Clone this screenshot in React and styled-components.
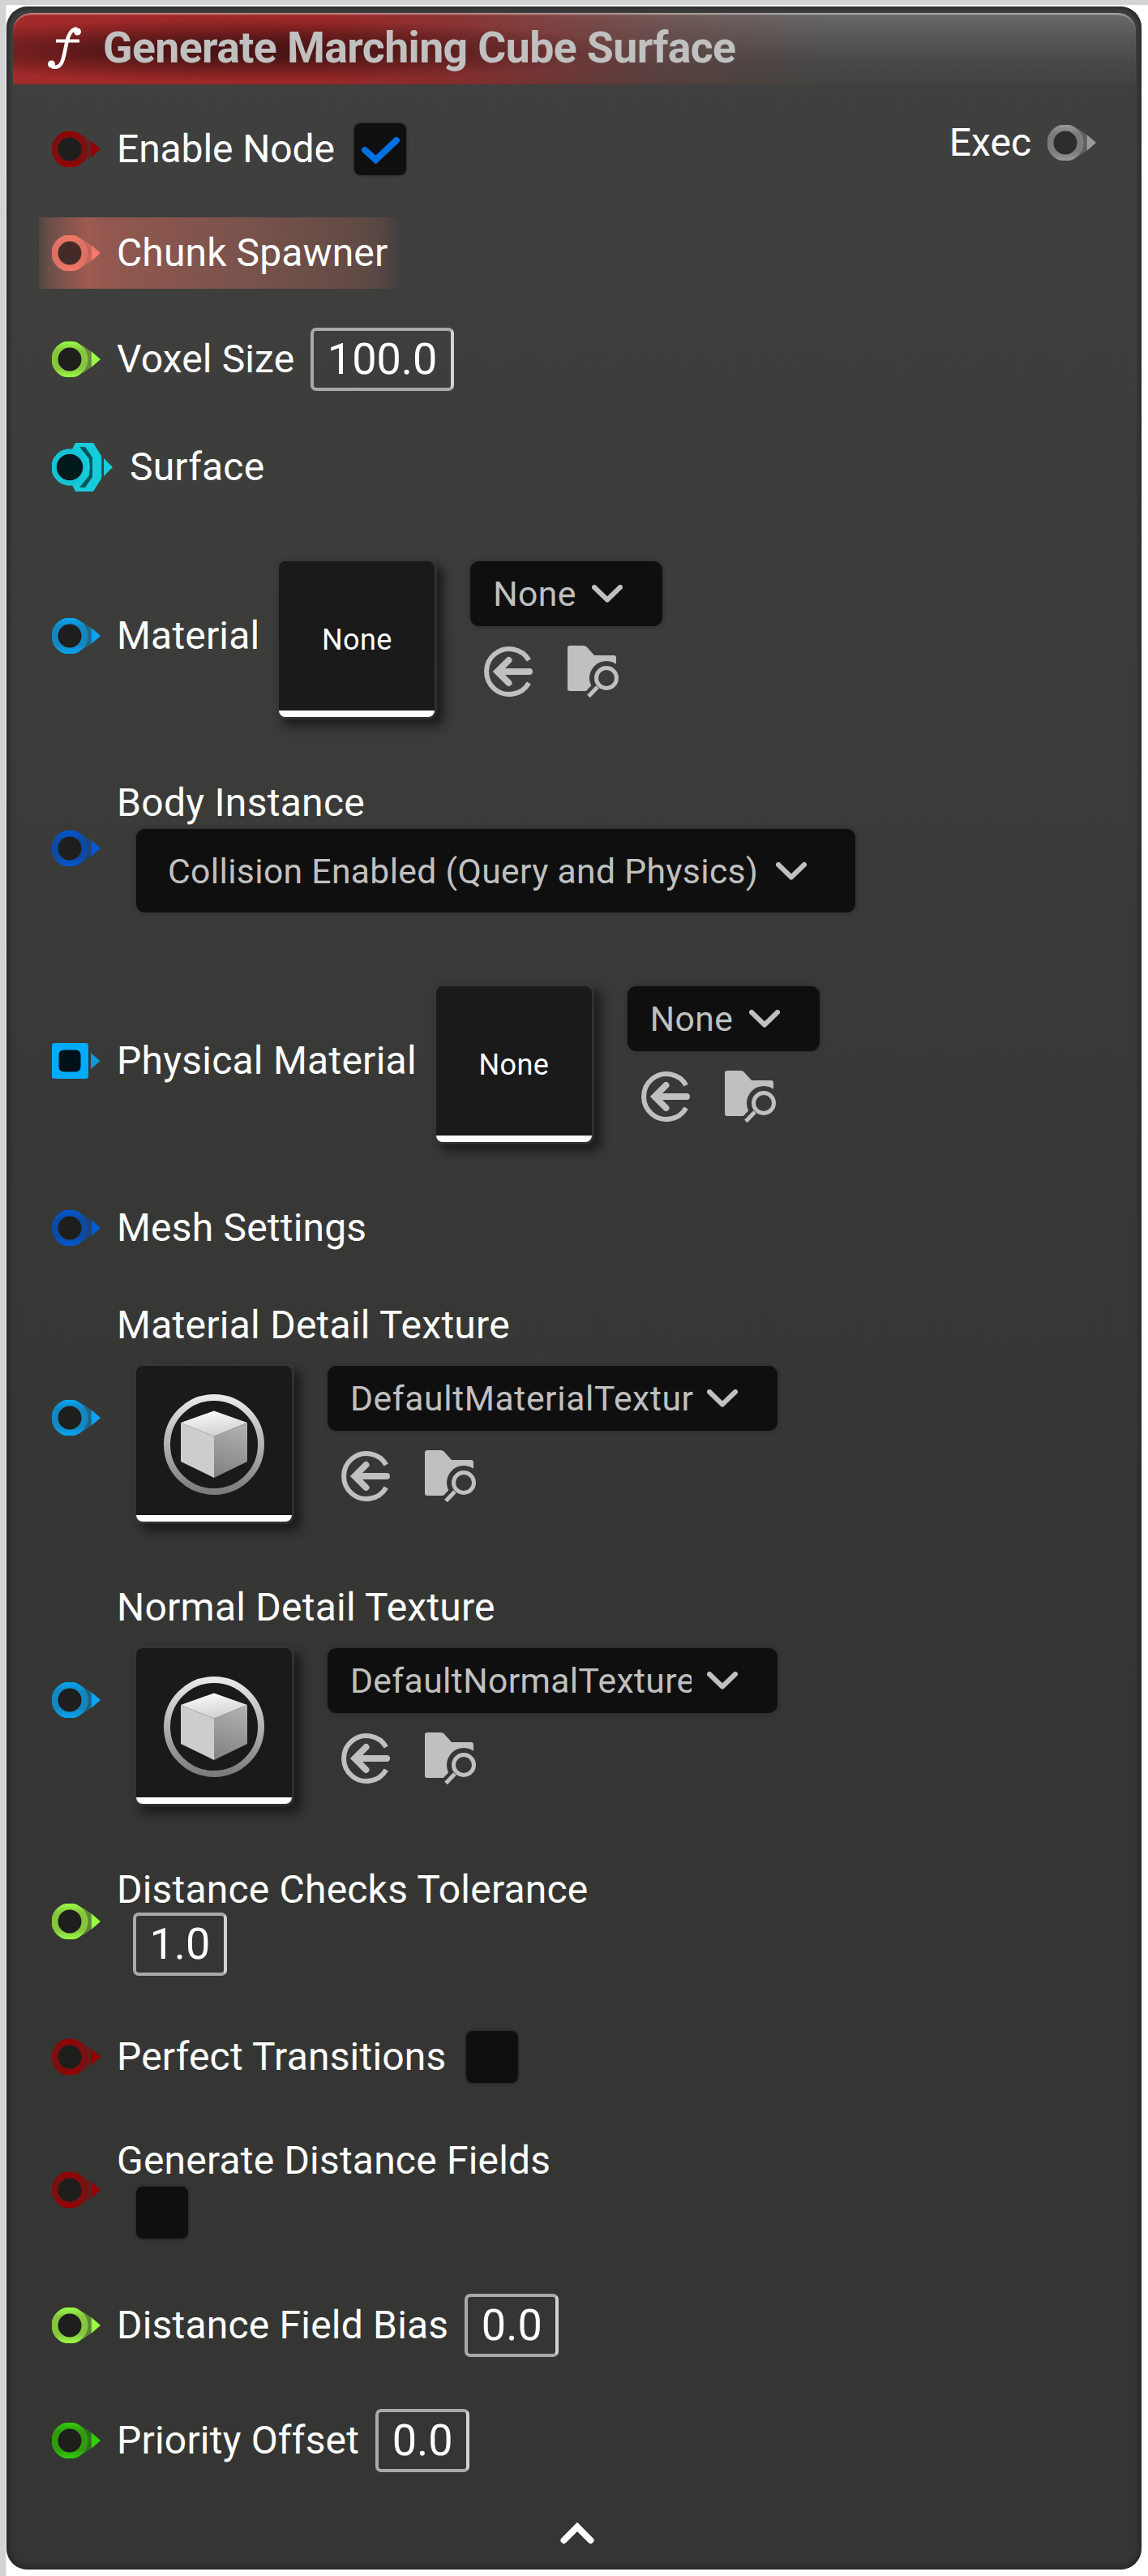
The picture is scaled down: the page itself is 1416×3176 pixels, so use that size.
import React, { useId } from "react";
import styled, { createGlobalStyle, css } from "styled-components";

const GlobalStyle = createGlobalStyle`
  * { box-sizing: border-box; }
  body {
    margin: 0;
    background: #fff;
    font-family: Roboto, "Noto Sans", sans-serif;
  }
`;

const Canvas = styled.main`
  width: 1416px;
  height: 3176px;
  padding: 8px;
  background:
    linear-gradient(#d3d3d3, #d3d3d3) 0 0 / 100% 6px no-repeat,
    linear-gradient(90deg, #d3d3d3 6px, #ececec 8px) 0 0 / 8px 100% no-repeat,
    #fff;
`;

const Node = styled.section`
  display: flex;
  flex-direction: column;
  width: 1400px;
  height: 3160px;
  border-radius: 26px;
  background: linear-gradient(#404040 0, #3e3e3d 330px, #3b3c39 900px, #373836 1500px, #353633 2100px, #353633 100%);
  box-shadow: inset 0 0 7px 2px #232323;
`;

const Header = styled.header`
  display: flex;
  align-items: center;
  gap: 23px;
  height: 88px;
  flex: none;
  margin: 8px 7px 0 8px;
  padding: 0 40px 3px;
  border-radius: 22px 22px 0 0;
  box-shadow: inset 0 3px 2px -1px rgba(255, 255, 255, 0.4), inset 0 1px 1px rgba(255, 255, 255, 0.1);
  background:
    radial-gradient(ellipse 470px 38px at 280px 46px, rgba(52, 14, 14, 0.85) 0, rgba(56, 16, 16, 0.7) 35%, rgba(60, 18, 18, 0) 100%),
    linear-gradient(97deg, #a32a2a 0, #9a2727 380px, rgba(150, 38, 38, 0.75) 560px, rgba(140, 50, 48, 0.28) 800px, rgba(120, 70, 66, 0) 1000px),
    linear-gradient(#686a68 0, #565756 35%, #474847 70%, #414340 100%);
`;

const Title = styled.h1`
  margin: 0;
  font-size: 53.6px;
  font-weight: 700;
  line-height: 56px;
  letter-spacing: -0.6px;
  white-space: nowrap;
  color: #c0c0c0;
`;

const Body = styled.div`
  display: flex;
  justify-content: space-between;
  align-items: flex-start;
  flex: 1;
  padding: 0 56px;
`;

const Pins = styled.div`
  display: flex;
  flex-direction: column;
  align-items: flex-start;
  padding-top: ${(p) => p.$top}px;
`;

const highlight = css`
  height: 88px;
  width: 447px;
  margin-left: -16px;
  padding-left: 16px;
  background: linear-gradient(
    90deg,
    #50463f 0,
    #6b4f4a 12px,
    #85554e 36px,
    #9f5b50 62px,
    #93584f 80px,
    #7a534c 250px,
    #604a44 402px,
    #544641 425px,
    rgba(62, 62, 61, 0) 447px
  );
`;

const Row = styled.div`
  display: flex;
  align-items: center;
  gap: 20px;
  margin-top: ${(p) => p.$gap || 0}px;
  min-height: 56px;
  ${(p) => p.$height && css`height: ${p.$height}px;`}
  ${(p) => p.$lit && highlight}
`;

const Field = styled.div`
  display: flex;
  align-items: ${(p) => (p.$stacked ? "flex-start" : "center")};
  flex-direction: ${(p) => (p.$stacked ? "column" : "row")};
  ${(p) => p.$stacked && css`align-self: flex-start;`}
`;

const Label = styled.span`
  font-size: 48px;
  line-height: 56px;
  letter-spacing: ${(p) => p.$track ?? 0.2}px;
  white-space: nowrap;
  color: #fff;
`;

const NumberBox = styled.div`
  display: flex;
  align-items: center;
  justify-content: center;
  height: 78px;
  margin-left: 20px;
  padding: 0 16.5px;
  border: 4px solid #a9aaa8;
  border-right-color: #d2d3d1;
  border-radius: 7px;
  font-size: 54px;
  line-height: 64px;
  color: #fff;
`;

const CheckBox = styled.div`
  width: 64px;
  height: 64px;
  margin: ${(p) => p.$top || 0}px 0 0 24px;
  border-radius: 8px;
  background: #0f0f0f;
  box-shadow: 0 0 3px 1px rgba(30, 30, 30, 0.6);
`;

const Asset = styled.div`
  display: flex;
  align-items: flex-start;
  gap: 44px;
  margin: ${(p) => p.$top}px 0 0 24px;
`;

const Thumb = styled.div`
  display: flex;
  align-items: center;
  justify-content: center;
  width: 192px;
  height: 192px;
  border-radius: 8px;
  border-bottom: 8px solid #fff;
  padding-top: 9px;
  background: #1a1a1a;
  font-size: 36px;
  letter-spacing: 0.4px;
  color: #fff;
  box-shadow: 0 0 0 3px rgba(55, 55, 55, 0.7), 8px 8px 12px 4px rgba(20, 20, 20, 0.75);
`;

const Tools = styled.div`
  display: flex;
  flex-direction: column;
  gap: 24px;
`;

const ToolIcons = styled.div`
  display: flex;
  gap: 40px;
  padding-left: 16px;
`;

const Combo = styled.div`
  display: flex;
  align-items: center;
  justify-content: space-between;
  width: ${(p) => p.$width}px;
  height: ${(p) => p.$height || 80}px;
  margin: ${(p) => p.$margin || "0"};
  padding: 0 ${(p) => p.$right || 49}px 0 ${(p) => p.$left || 28}px;
  border-radius: 11px;
  background: #0f0f0f;
  box-shadow: 0 0 4px 1px rgba(40, 40, 40, 0.7);
`;

const ComboText = styled.span`
  overflow: hidden;
  white-space: nowrap;
  max-width: ${(p) => (p.$clip ? `${p.$clip}px` : "none")};
  font-size: 42.67px;
  line-height: 56px;
  letter-spacing: ${(p) => p.$track ?? 0.33}px;
  color: #c0c0c0;
`;

const Footer = styled.footer`
  display: flex;
  justify-content: center;
  flex: none;
  height: 59px;
  padding-left: 8px;
`;

const Icon = styled.svg`
  display: block;
  flex: none;
`;

const PinIcon = styled(Icon)`
  filter: blur(0.7px);
`;

function Pin({ ring, bright, core = "#1e1e1c" }) {
  const id = useId();
  return (
    <PinIcon width="60" height="44" viewBox="0 0 60 44">
      <defs>
        <linearGradient id={id} x1="0" y1="0" x2="0" y2="44" gradientUnits="userSpaceOnUse">
          <stop offset="0" stopColor={bright} />
          <stop offset="0.25" stopColor={ring} />
          <stop offset="0.75" stopColor={ring} />
          <stop offset="1" stopColor={bright} />
        </linearGradient>
      </defs>
      <path d="M38 5 L48 12 V32 L38 39Z" fill={ring} opacity="0.55" />
      <circle cx="22" cy="22" r="18.5" fill={core} stroke={`url(#${id})`} strokeWidth="8" />
      <path d="M48.5 12 L60 22 L48.5 32Z" fill={bright} />
    </PinIcon>
  );
}

function SquarePin() {
  return (
    <PinIcon width="60" height="44" viewBox="0 0 60 44">
      <rect width="45" height="44" rx="3" fill="#00aaff" />
      <rect x="8.5" y="8.5" width="27" height="27" rx="6" fill="#00111a" />
      <path d="M48 12 L59.5 22 L48 32Z" fill="#1398dd" />
    </PinIcon>
  );
}

function LayeredPin() {
  return (
    <PinIcon width="76" height="60" viewBox="0 0 76 60">
      <path d="M56 13 L62 18 V42 L56 47Z" fill="#12707a" />
      <path d="M29 0 H51 L61 16 V44 L51 60 H29 L22 46 V14Z" fill="#14ccdc" />
      <path d="M34 5 H41 L50 18 V42 L41 55 H34 L46 40 V20Z" fill="#07555c" />
      <circle cx="22" cy="30" r="19.5" fill="#001a1c" stroke="#14c4d4" strokeWidth="6.5" />
      <path d="M41 18 Q47 30 41 42" fill="none" stroke="#14ccdc" strokeWidth="6" />
      <path d="M64 19 L75 30 L64 41Z" fill="#14ccdc" />
    </PinIcon>
  );
}

function FunctionIcon() {
  return (
    <Icon width="48" height="56" viewBox="0 0 48 56" fill="none" stroke="#fff">
      <path d="M7 49 Q9 52.5 14 51.5 C20 50 22 43 24.500 30 C27 16 30 4.500 39 4.500" strokeWidth="4.600" />
      <path d="M13 19.500 H42" strokeWidth="4" />
      <circle cx="7.500" cy="48" r="4.500" fill="#fff" stroke="none" />
      <circle cx="39.500" cy="8" r="4.500" fill="#fff" stroke="none" />
    </Icon>
  );
}

function Chevron({ up }) {
  return up ? (
    <Icon width="42" height="28" viewBox="0 0 42 28">
      <path d="M4.500 23 L21 6.500 L37.500 23" fill="none" stroke="#fff" strokeWidth="8" strokeLinecap="round" />
    </Icon>
  ) : (
    <Icon width="38" height="22" viewBox="0 0 38 22">
      <path d="M3 3 L19 18.500 L35 3" fill="none" stroke="#c0c0c0" strokeWidth="6" strokeLinecap="round" strokeLinejoin="round" />
    </Icon>
  );
}

function UseIcon() {
  return (
    <Icon width="64" height="64" viewBox="0 0 64 64" fill="none" stroke="#c0c0c0">
      <path d="M56.300 18 A28 28 0 1 0 56.300 46" strokeWidth="6" />
      <path d="M31.500 18 L17.500 32 L31.500 46 M19 32 H57" strokeWidth="8" strokeLinecap="round" />
    </Icon>
  );
}

function BrowseIcon() {
  const id = useId();
  return (
    <Icon width="64" height="64" viewBox="0 0 64 64">
      <defs>
        <mask id={id}>
          <rect width="64" height="64" fill="#fff" />
          <circle cx="48" cy="40" r="21" fill="#000" />
          <path d="M42 46 L22 67" stroke="#000" strokeWidth="14" />
        </mask>
      </defs>
      <path
        mask={`url(#${id})`}
        d="M3 0 H20 Q22 0 23.500 1.500 L33 12 H57 Q60 12 60 15 V56 H3 Q0 56 0 53 V3 Q0 0 3 0Z"
        fill="#c0c0c0"
      />
      <circle cx="48" cy="40" r="12.500" fill="none" stroke="#c0c0c0" strokeWidth="5" />
      <path d="M37 51 L26 62.500" stroke="#c0c0c0" strokeWidth="5" />
    </Icon>
  );
}

function CubeIcon() {
  const id = useId();
  return (
    <Icon width="128" height="128" viewBox="0 0 128 128">
      <defs>
        <linearGradient id={`${id}r`} x1="0" y1="0" x2="0" y2="1">
          <stop offset="0" stopColor="#e8e8e8" />
          <stop offset="1" stopColor="#7c7c7c" />
        </linearGradient>
        <linearGradient id={`${id}t`} x1="0" y1="0" x2="0.300" y2="1">
          <stop offset="0" stopColor="#fff" />
          <stop offset="1" stopColor="#d2d2d2" />
        </linearGradient>
        <linearGradient id={`${id}s`} x1="0.600" y1="0" x2="0.400" y2="1">
          <stop offset="0" stopColor="#b0b0b0" />
          <stop offset="1" stopColor="#848484" />
        </linearGradient>
      </defs>
      <circle cx="64" cy="64" r="58" fill="none" stroke={`url(#${id}r)`} strokeWidth="8" />
      <path d="M64 22.500 L105 37 L64 54 L23 37Z" fill={`url(#${id}t)`} />
      <path d="M23 37 L64 54 V105 L23 85Z" fill="#cdcdcd" />
      <path d="M105 37 L64 54 V105 L105 85Z" fill={`url(#${id}s)`} />
    </Icon>
  );
}

function AssetPicker({ top, name, width = 237, clip, track, preview }) {
  return (
    <Asset $top={top}>
      <Thumb>{preview || "None"}</Thumb>
      <Tools>
        <Combo $width={width}>
          <ComboText $clip={clip} $track={track}>{name}</ComboText>
          <Chevron />
        </Combo>
        <ToolIcons>
          <UseIcon />
          <BrowseIcon />
        </ToolIcons>
      </Tools>
    </Asset>
  );
}

const red = { ring: "#7c0f0f", bright: "#980000" };
const coral = { ring: "#de7163", bright: "#f57868", core: "#452b28" };
const lime = { ring: "#86c63e", bright: "#9aff45" };
const green = { ring: "#309a10", bright: "#33cf06" };
const sky = { ring: "#1288c2", bright: "#08a6f6" };
const blue = { ring: "#0d4aa4", bright: "#0059d4" };
const grey = { ring: "#7c7c7c", bright: "#9a9a9a", core: "#2d2d2d" };

export default function App() {
  return (
    <>
      <GlobalStyle />
      <Canvas>
        <Node>
          <Header>
            <FunctionIcon />
            <Title>Generate Marching Cube Surface</Title>
          </Header>
          <Body>
            <Pins $top={48}>
              <Row>
                <Pin {...red} />
                <Field>
                  <Label $track={-0.1}>Enable Node</Label>
                  <CheckBox>
                    <Icon width="64" height="64" viewBox="0 0 64 64">
                      <path d="M13 33 L26.500 45 L52 21" fill="none" stroke="#0070e0" strokeWidth="8" strokeLinecap="round" />
                    </Icon>
                  </CheckBox>
                </Field>
              </Row>
              <Row $gap={52} $lit>
                <Pin {...coral} />
                <Label $track={0.12}>Chunk Spawner</Label>
              </Row>
              <Row $gap={48}>
                <Pin {...lime} />
                <Field>
                  <Label $track={0.15}>Voxel Size</Label>
                  <NumberBox>100.0</NumberBox>
                </Field>
              </Row>
              <Row $gap={64} $height={60}>
                <LayeredPin />
                <Label>Surface</Label>
              </Row>
              <Row $gap={78} $height={200}>
                <Pin {...sky} />
                <Field>
                  <Label $track={0.18}>Material</Label>
                  <AssetPicker top={8} name="None" />
                </Field>
              </Row>
              <Row $gap={78} $height={168}>
                <Pin {...blue} />
                <Field $stacked>
                  <Label $track={0.3}>Body Instance</Label>
                  <Combo $width={887} $height={103} $margin="4px 0 0 24px" $left={39} $right={60}>
                    <ComboText>Collision Enabled (Query and Physics)</ComboText>
                    <Chevron />
                  </Combo>
                </Field>
              </Row>
              <Row $gap={78} $height={200}>
                <SquarePin />
                <Field>
                  <Label $track={0.25}>Physical Material</Label>
                  <AssetPicker top={8} name="None" />
                </Field>
              </Row>
              <Row $gap={78}>
                <Pin {...blue} />
                <Label>Mesh Settings</Label>
              </Row>
              <Row $gap={64} $height={284}>
                <Pin {...sky} />
                <Field $stacked>
                  <Label $track={0.26}>Material Detail Texture</Label>
                  <AssetPicker top={22} name="DefaultMaterialTextur" width={555} track={0.6} preview={<CubeIcon />} />
                </Field>
              </Row>
              <Row $gap={64} $height={284}>
                <Pin {...sky} />
                <Field $stacked>
                  <Label $track={0.24}>Normal Detail Texture</Label>
                  <AssetPicker top={22} name="DefaultNormalTexture" width={555} clip={421} track={0.38} preview={<CubeIcon />} />
                </Field>
              </Row>
              <Row $gap={64} $height={134}>
                <Pin {...lime} />
                <Field $stacked>
                  <Label>Distance Checks Tolerance</Label>
                  <NumberBox>1.0</NumberBox>
                </Field>
              </Row>
              <Row $gap={68}>
                <Pin {...red} />
                <Field>
                  <Label>Perfect Transitions</Label>
                  <CheckBox />
                </Field>
              </Row>
              <Row $gap={68} $height={128}>
                <Pin {...red} />
                <Field $stacked>
                  <Label>Generate Distance Fields</Label>
                  <CheckBox $top={4} />
                </Field>
              </Row>
              <Row $gap={64}>
                <Pin {...lime} />
                <Field>
                  <Label>Distance Field Bias</Label>
                  <NumberBox>0.0</NumberBox>
                </Field>
              </Row>
              <Row $gap={64}>
                <Pin {...green} />
                <Field>
                  <Label>Priority Offset</Label>
                  <NumberBox>0.0</NumberBox>
                </Field>
              </Row>
            </Pins>
            <Pins $top={44}>
              <Row>
                <Label $track={0}>Exec</Label>
                <Pin {...grey} />
              </Row>
            </Pins>
          </Body>
          <Footer>
            <Chevron up />
          </Footer>
        </Node>
      </Canvas>
    </>
  );
}
